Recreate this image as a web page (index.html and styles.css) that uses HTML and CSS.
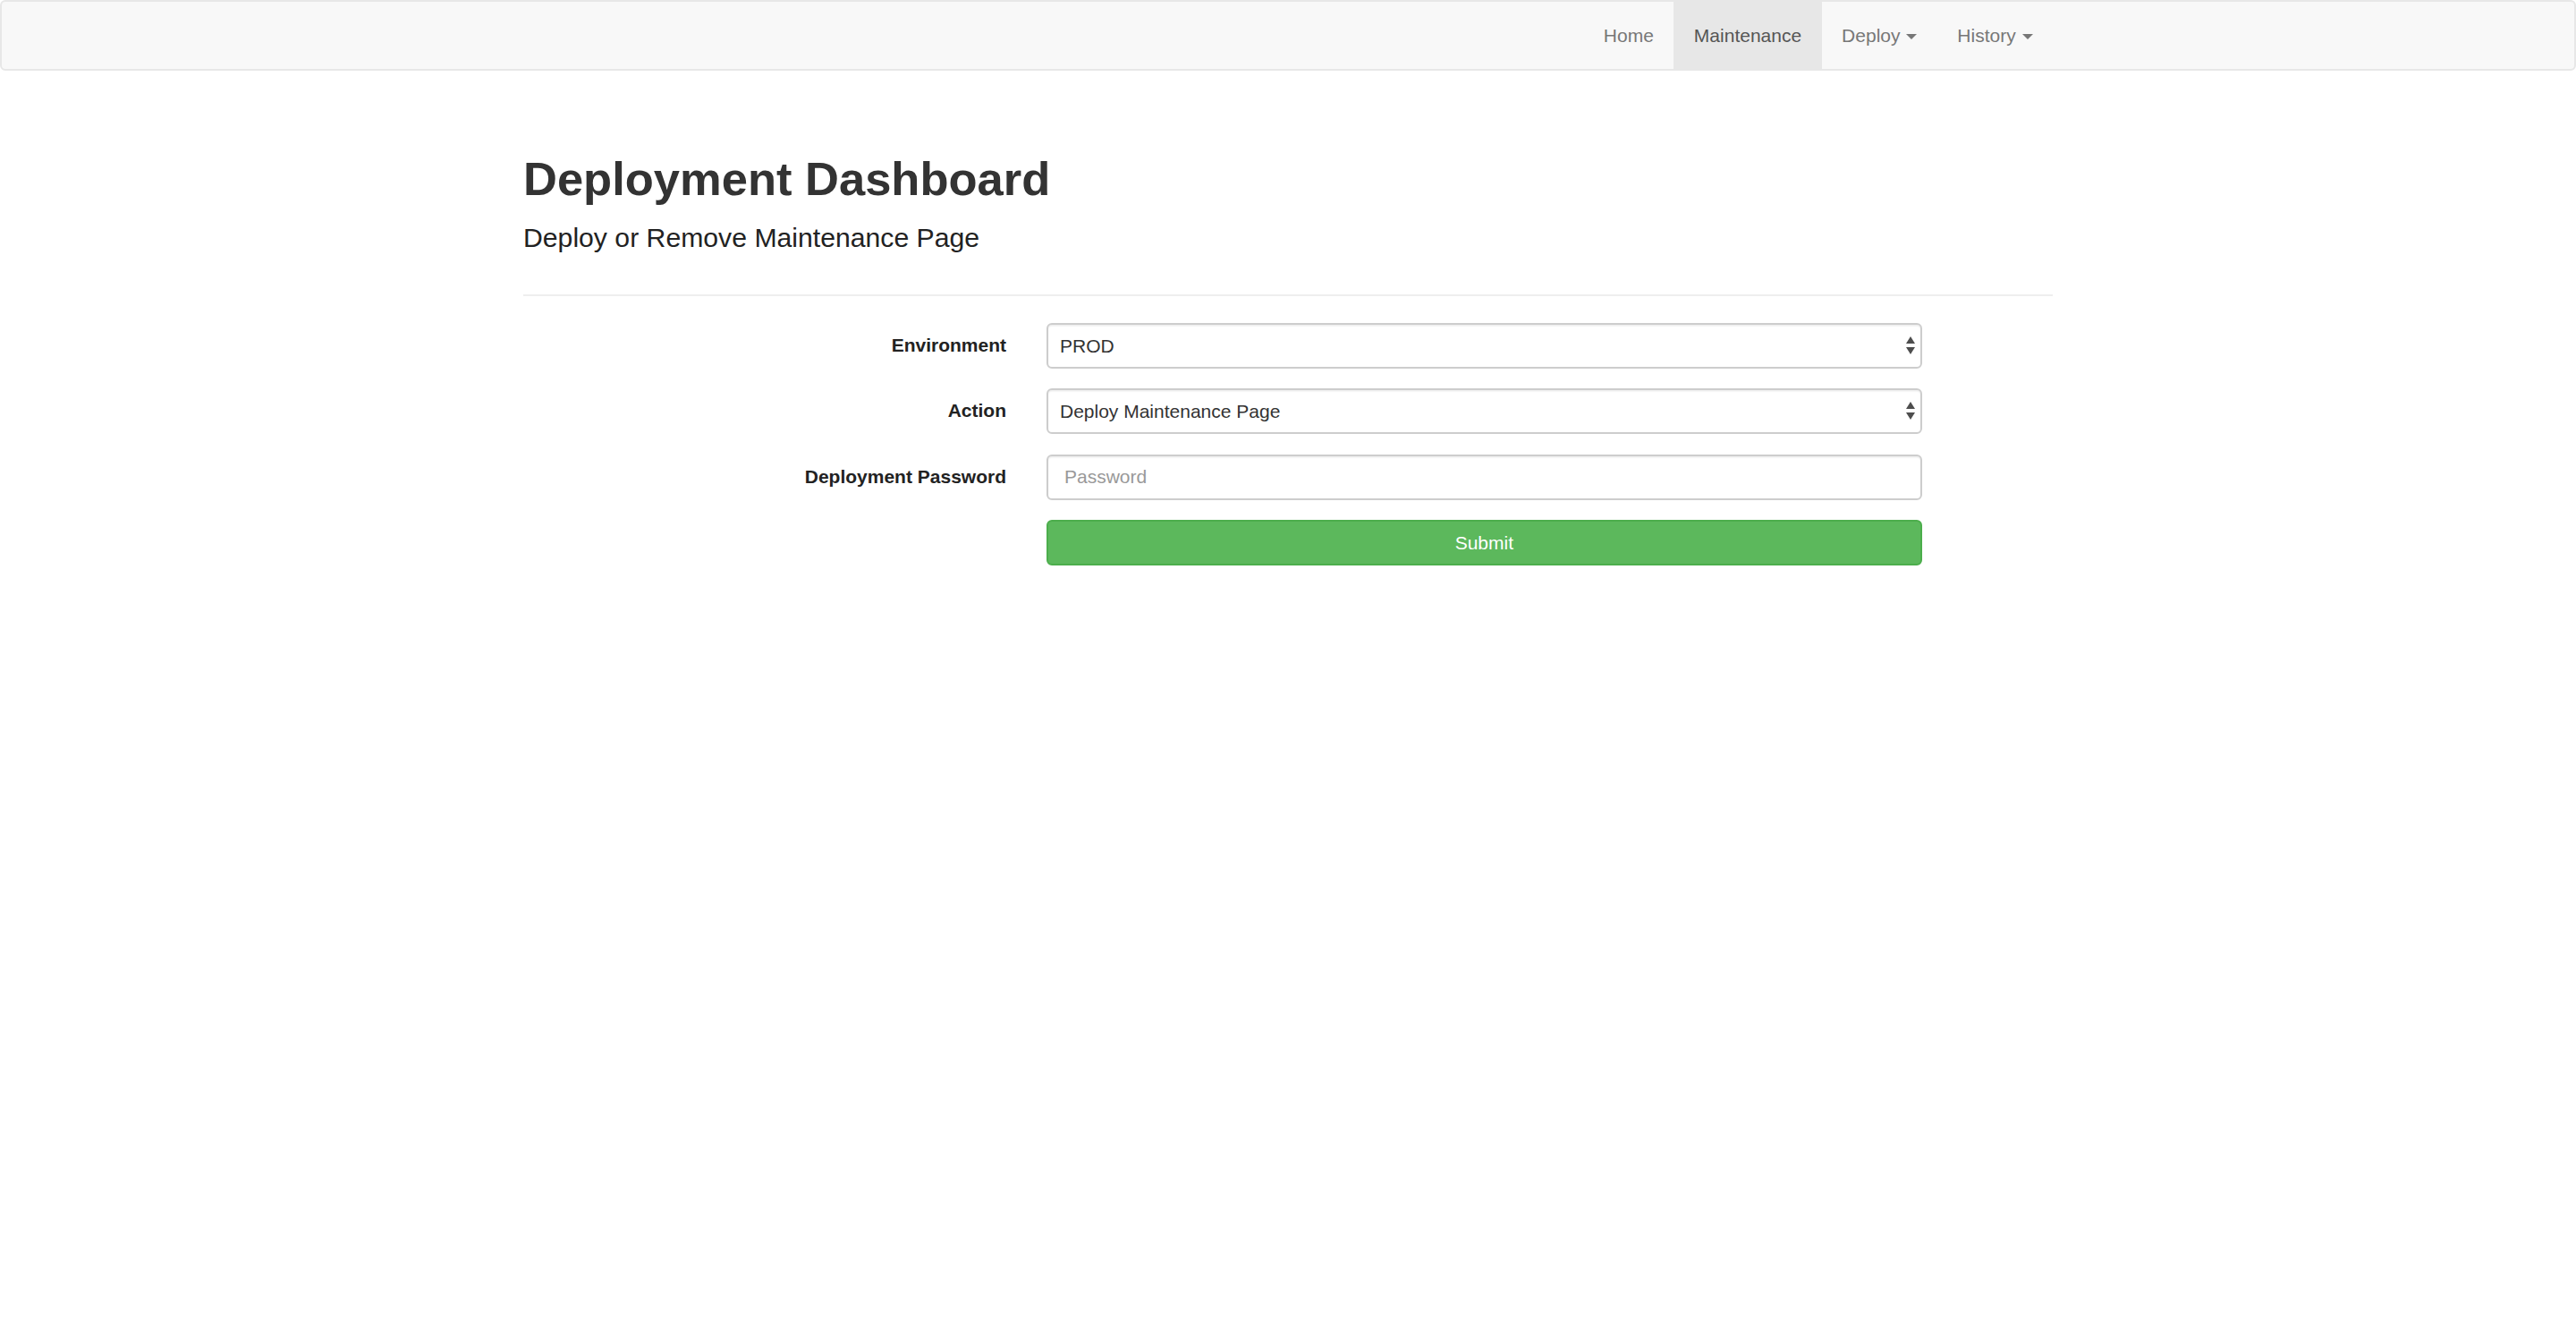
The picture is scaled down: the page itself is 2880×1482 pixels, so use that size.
FILE: index.html
```html
<!DOCTYPE html>
<html lang="en">
<head>
<meta charset="utf-8">
<title>Deployment Dashboard</title>
<link rel="stylesheet" href="styles.css">
</head>
<body>
<nav class="navbar">
  <div class="navbar-inner">
    <ul class="nav">
      <li><a href="#">Home</a></li>
      <li class="active"><a href="#">Maintenance</a></li>
      <li><a href="#">Deploy <span class="caret"></span></a></li>
      <li><a href="#">History <span class="caret"></span></a></li>
    </ul>
  </div>
</nav>
<main class="container">
  <header class="page-header">
    <h1>Deployment Dashboard</h1>
    <p class="lead">Deploy or Remove Maintenance Page</p>
  </header>
  <form class="form">
    <div class="form-group">
      <label class="control-label">Environment</label>
      <div class="field">
        <div class="select-wrap">
          <select class="form-control select"><option>PROD</option></select>
        </div>
      </div>
    </div>
    <div class="form-group">
      <label class="control-label">Action</label>
      <div class="field">
        <div class="select-wrap">
          <select class="form-control select"><option>Deploy Maintenance Page</option></select>
        </div>
      </div>
    </div>
    <div class="form-group">
      <label class="control-label">Deployment Password</label>
      <div class="field">
        <input class="form-control" type="password" placeholder="Password">
      </div>
    </div>
    <div class="form-group">
      <div class="control-label"></div>
      <div class="field">
        <button class="btn-submit" type="button">Submit</button>
      </div>
    </div>
  </form>
</main>
</body>
</html>
```

FILE: styles.css
```css
* { box-sizing: border-box; }

body {
  margin: 0;
  font-family: "Liberation Sans", Arial, sans-serif;
  font-size: 21px;
  line-height: 30px;
  color: #333;
  background: #fff;
}

.navbar {
  background: #f8f8f8;
  border: 2px solid #e7e7e7;
  border-radius: 6px;
}

.navbar-inner {
  width: 1755px;
  margin: 0 auto;
  padding: 0 22.5px;
  display: flex;
  justify-content: flex-end;
}

.nav {
  list-style: none;
  margin: 0;
  padding: 0;
  display: flex;
}

.nav a {
  display: block;
  padding: 22.5px;
  line-height: 30px;
  color: #777;
  text-decoration: none;
}

.nav .active a {
  background: #e7e7e7;
  color: #555;
}

.caret {
  display: inline-block;
  width: 0;
  height: 0;
  margin-left: 1px;
  vertical-align: middle;
  border-top: 6px solid;
  border-left: 6px solid transparent;
  border-right: 6px solid transparent;
}

.container {
  width: 1710px;
  margin: 0 auto;
}

.page-header {
  margin: 92px 0 30px;
  padding-bottom: 42px;
  border-bottom: 2px solid #eee;
}

.page-header h1 {
  margin: 0 0 16px;
  font-size: 52.5px;
  line-height: 1.1;
  font-weight: 700;
  color: #333;
}

.lead {
  margin: 0;
  font-size: 30.2px;
  line-height: 42px;
  font-weight: 300;
  color: #222;
}

.form-group {
  display: flex;
  margin: 0 -22.5px 22.5px;
}

.control-label {
  width: 33.3333%;
  padding: 10px 22.5px 0;
  text-align: right;
  font-weight: 700;
  color: #222;
}

.field {
  width: 58.3333%;
  padding: 0 22.5px;
}

.form-control {
  display: block;
  width: 100%;
  height: 51px;
  padding: 9px 18px;
  font-family: inherit;
  font-size: 21px;
  color: #555;
  background: #fff;
  border: 2px solid #cdcdcd;
  border-radius: 6px;
  box-shadow: inset 0 1.5px 1.5px rgba(0, 0, 0, 0.075);
  outline: none;
}

.form-control::placeholder {
  color: #999;
}

.select-wrap {
  position: relative;
}

.select {
  -webkit-appearance: none;
  appearance: none;
  padding-left: 13px;
  color: #333;
}

.select-wrap::before,
.select-wrap::after {
  content: "";
  position: absolute;
  right: 8px;
  width: 0;
  height: 0;
  border-left: 5px solid transparent;
  border-right: 5px solid transparent;
  pointer-events: none;
}

.select-wrap::before {
  top: 15px;
  border-bottom: 8px solid #4d4d4d;
}

.select-wrap::after {
  top: 27px;
  border-top: 8px solid #4d4d4d;
}

.btn-submit {
  display: block;
  width: 100%;
  height: 51px;
  padding: 9px 18px;
  font-family: inherit;
  font-size: 21px;
  line-height: 30px;
  color: #fff;
  background: #5cb85c;
  border: 2px solid #4cae4c;
  border-radius: 6px;
  cursor: pointer;
}
```
